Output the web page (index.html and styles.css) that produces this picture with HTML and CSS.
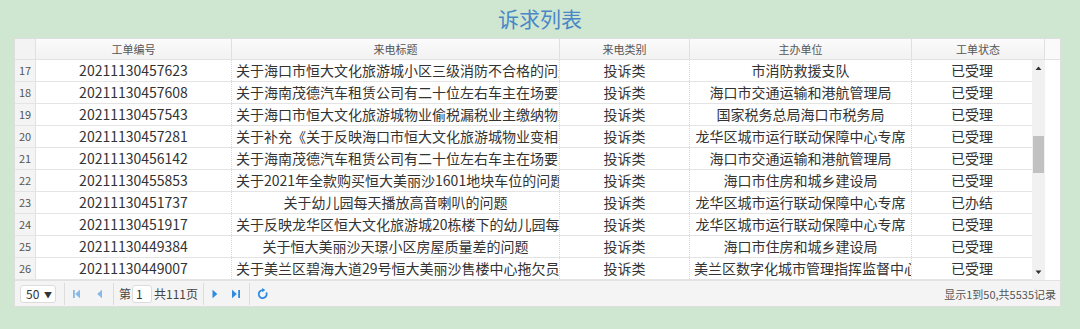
FILE: index.html
```html
<!DOCTYPE html>
<html lang="zh">
<head>
<meta charset="utf-8">
<title>诉求列表</title>
<link rel="stylesheet" href="styles.css">
</head>
<body>
<h1 class="title">诉求列表</h1>
<div class="panel">
  <div class="grid-head">
    <div class="hc rn"></div>
    <div class="hc">工单编号</div>
    <div class="hc">来电标题</div>
    <div class="hc">来电类别</div>
    <div class="hc">主办单位</div>
    <div class="hc last">工单状态</div>
    <div class="hc-fill"></div>
  </div>
  <div class="grid-body">
    <div class="rows">
      <div class="row"><div class="c rn">17</div><div class="c">20211130457623</div><div class="c">关于海口市恒大文化旅游城小区三级消防不合格的问题</div><div class="c">投诉类</div><div class="c">市消防救援支队</div><div class="c">已受理</div></div>
      <div class="row"><div class="c rn">18</div><div class="c">20211130457608</div><div class="c">关于海南茂德汽车租赁公司有二十位左右车主在场要求退款</div><div class="c">投诉类</div><div class="c">海口市交通运输和港航管理局</div><div class="c">已受理</div></div>
      <div class="row"><div class="c rn">19</div><div class="c">20211130457543</div><div class="c">关于海口市恒大文化旅游城物业偷税漏税业主缴纳物业费</div><div class="c">投诉类</div><div class="c">国家税务总局海口市税务局</div><div class="c">已受理</div></div>
      <div class="row"><div class="c rn">20</div><div class="c">20211130457281</div><div class="c">关于补充《关于反映海口市恒大文化旅游城物业变相收费》</div><div class="c">投诉类</div><div class="c">龙华区城市运行联动保障中心专席</div><div class="c">已受理</div></div>
      <div class="row"><div class="c rn">21</div><div class="c">20211130456142</div><div class="c">关于海南茂德汽车租赁公司有二十位左右车主在场要求退款</div><div class="c">投诉类</div><div class="c">海口市交通运输和港航管理局</div><div class="c">已受理</div></div>
      <div class="row"><div class="c rn">22</div><div class="c">20211130455853</div><div class="c">关于2021年全款购买恒大美丽沙1601地块车位的问题</div><div class="c">投诉类</div><div class="c">海口市住房和城乡建设局</div><div class="c">已受理</div></div>
      <div class="row"><div class="c rn">23</div><div class="c">20211130451737</div><div class="c">关于幼儿园每天播放高音喇叭的问题</div><div class="c">投诉类</div><div class="c">龙华区城市运行联动保障中心专席</div><div class="c">已办结</div></div>
      <div class="row"><div class="c rn">24</div><div class="c">20211130451917</div><div class="c">关于反映龙华区恒大文化旅游城20栋楼下的幼儿园每天</div><div class="c">投诉类</div><div class="c">龙华区城市运行联动保障中心专席</div><div class="c">已受理</div></div>
      <div class="row"><div class="c rn">25</div><div class="c">20211130449384</div><div class="c">关于恒大美丽沙天璟小区房屋质量差的问题</div><div class="c">投诉类</div><div class="c">海口市住房和城乡建设局</div><div class="c">已受理</div></div>
      <div class="row"><div class="c rn">26</div><div class="c">20211130449007</div><div class="c">关于美兰区碧海大道29号恒大美丽沙售楼中心拖欠员工工资</div><div class="c">投诉类</div><div class="c">美兰区数字化城市管理指挥监督中心</div><div class="c">已受理</div></div>
    </div>
    <div class="vscroll">
      <svg class="arrow" width="13" height="16" viewBox="0 0 13 16"><path d="M3.5 10 L6.5 6.5 L9.5 10 Z" fill="#333"/></svg>
      <div class="track"><div class="thumb"></div></div>
      <svg class="arrow" width="13" height="16" viewBox="0 0 13 16"><path d="M3.5 6.5 L6.5 10 L9.5 6.5 Z" fill="#333"/></svg>
    </div>
    <div class="body-fill"></div>
  </div>
  <div class="pager">
    <div class="pager-left">
      <div class="sel">50 <span class="caret">▼</span></div>
      <span class="sep s1"></span>
      <svg class="pbtn dis" width="26" height="16" viewBox="0 0 26 16"><rect x="8" y="4" width="1.8" height="8" fill="#2f8ae0"/><path d="M15 3.8 L10.2 8 L15 12.2 Z" fill="#2f8ae0"/></svg>
      <svg class="pbtn dis" width="22" height="16" viewBox="0 0 22 16"><path d="M11 3.8 L6.2 8 L11 12.2 Z" fill="#2f8ae0"/></svg>
      <span class="sep s2"></span>
      <span class="ptxt">第</span>
      <div class="pinput">1</div>
      <span class="ptxt total">共111页</span>
      <span class="sep s3"></span>
      <svg class="pbtn" width="24" height="16" viewBox="0 0 24 16"><path d="M8.5 3.8 L13.3 8 L8.5 12.2 Z" fill="#2f8ae0"/></svg>
      <svg class="pbtn" width="21" height="16" viewBox="0 0 21 16"><path d="M4 3.8 L8.8 8 L4 12.2 Z" fill="#2f8ae0"/><rect x="10.2" y="4" width="1.8" height="8" fill="#2f8ae0"/></svg>
      <span class="sep s4"></span>
      <svg class="pbtn" width="24" height="16" viewBox="0 0 24 16"><path d="M16.3 6.3 A4 4 0 1 1 13 4.1" fill="none" stroke="#2f8ae0" stroke-width="1.8"/><path d="M12.2 1.9 L15.3 4.1 L12.2 6.3 Z" fill="#2f8ae0"/></svg>
    </div>
    <div class="pager-info">显示1到50,共5535记录</div>
  </div>
</div>
</body>
</html>
```
FILE: styles.css
```css
* { box-sizing: border-box; }
html, body { margin: 0; padding: 0; }
body {
  background: #cfe7d1;
  font-family: "Noto Sans CJK SC", "Microsoft YaHei", sans-serif;
  color: #333;
  width: 1080px;
  height: 329px;
  overflow: hidden;
}
.title {
  margin: 0;
  height: 38px;
  padding-top: 3px;
  text-align: center;
  font-size: 21px;
  font-weight: normal;
  line-height: 30px;
  color: #4b87c6;
}
.panel {
  margin-left: 14px;
  width: 1047px;
  border: 1px solid #dedede;
  background: #fff;
}
.grid-head {
  display: grid;
  grid-template-columns: 21px 196px 328px 130px 222px 133px 15px;
  height: 21px;
  border-bottom: 1px solid #e2e2e2;
  background: linear-gradient(#fbfbfb, #f2f2f2);
}
.hc {
  font-size: 11px;
  color: #555;
  text-align: center;
  line-height: 20px;
  border-right: 1px solid #e0e0e0;
  white-space: nowrap;
  overflow: hidden;
}
.hc.rn { background: #f3f3f3; }
.hc-fill { background: #fafafa; }
.grid-body {
  display: flex;
  height: 220px;
}
.rows { width: 1017px; }
.row {
  display: grid;
  grid-template-columns: 21px 196px 328px 130px 222px 120px;
  height: 22px;
  border-bottom: 1px solid #e4e4e4;
}
.c {
  font-size: 14px;
  line-height: 21px;
  text-align: center;
  padding: 0 4px;
  white-space: nowrap;
  overflow: hidden;
  border-right: 1px dotted #d6d6d6;
  color: #333;
}
.c.rn {
  background: #f4f4f4;
  font-size: 11px;
  color: #555;
  padding: 0;
  border-right: 1px solid #e2e2e2;
}
.row .c:last-child { border-right: none; }
.vscroll {
  width: 13px;
  display: flex;
  flex-direction: column;
  background: #f1f1f1;
}
.arrow { display: block; flex: none; }
.track { flex: 1; }
.thumb {
  margin-top: 60px;
  height: 37px;
  background: #c1c1c1;
  margin-left: 1px;
  margin-right: 1px;
}
.body-fill { width: 15px; background: #fff; }
.pager {
  display: flex;
  justify-content: space-between;
  align-items: center;
  height: 26px;
  border-top: 1px solid #e2e2e2;
  background: #f4f4f4;
  padding: 0 4px 0 5px;
}
.pager-left {
  display: flex;
  align-items: center;
}
.sel {
  width: 36px;
  height: 18px;
  border: 1px solid #dcdcdc;
  border-radius: 3px;
  background: #fff;
  font-size: 12px;
  line-height: 16px;
  padding-left: 5px;
  color: #333;
}
.caret { font-size: 8px; margin-left: 2px; vertical-align: 1px; }
.sep {
  width: 1px;
  height: 22px;
  background: #dcdcdc;
}
.sep.s1 { margin-left: 8px; }
.sep.s2 { margin-right: 5px; }
.sep.s3 { margin-left: 5px; }
.pbtn { display: block; }
.pbtn.dis { opacity: 0.55; }
.ptxt { font-size: 12px; color: #444; }
.pinput {
  width: 20px;
  height: 18px;
  border: 1px solid #dcdcdc;
  border-radius: 3px;
  background: #fff;
  font-size: 12px;
  line-height: 16px;
  padding-left: 3px;
  margin-left: 1px;
}
.ptxt.total { margin-left: 2px; }
.pager-info {
  font-size: 11px;
  color: #555;
}
```
